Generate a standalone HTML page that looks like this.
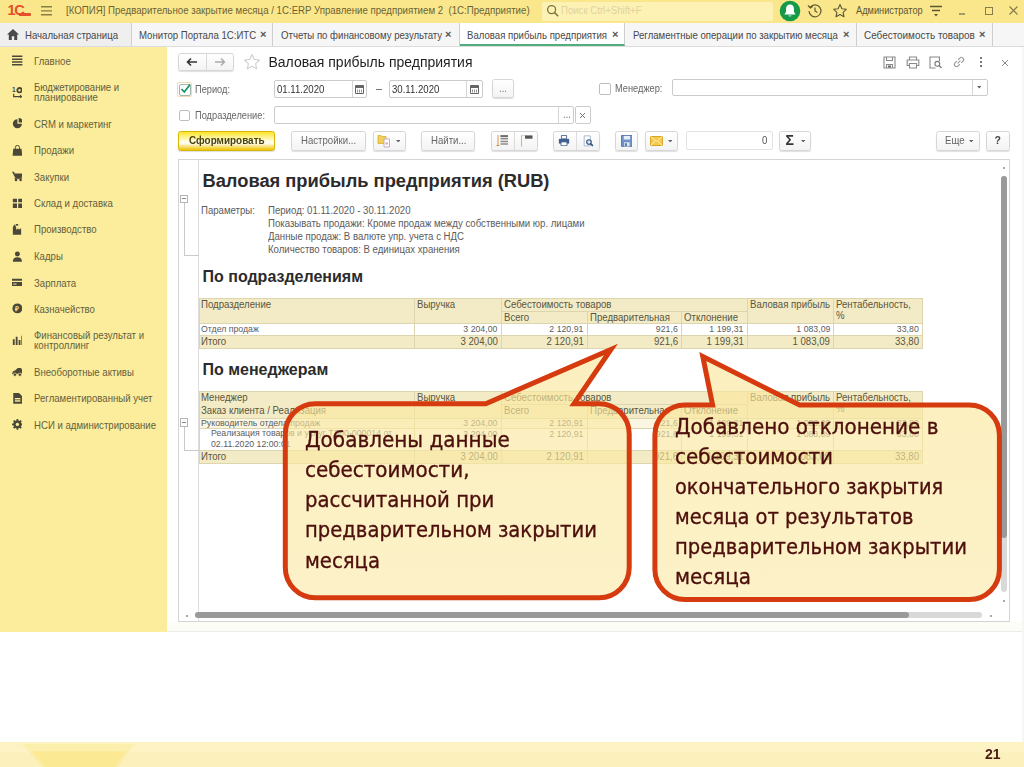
<!DOCTYPE html>
<html lang="ru"><head><meta charset="utf-8"><title>Валовая прибыль предприятия</title>
<style>
*{box-sizing:border-box;margin:0;padding:0}
html,body{width:1024px;height:767px;overflow:hidden;background:#fff}
body{position:relative;font-family:"Liberation Sans",sans-serif;font-size:10px;color:#4a4a4a}
.a{position:absolute;white-space:nowrap}
.t{position:absolute;white-space:nowrap;line-height:12px;font-size:10.4px;transform:scaleX(.925);transform-origin:0 50%}
.r{transform-origin:100% 50%;text-align:right}
/* title bar */
#tb{left:0;top:0;width:1024px;height:23px;background:#fbe78b}
#srch{left:542px;top:2px;width:231px;height:19px;background:#fdf2b3;border-radius:2px}
/* tabs */
#tabs{left:0;top:23px;width:1024px;height:24px;background:#f6f6f6;border-bottom:1px solid #dcdcdc}
.tab{position:absolute;top:0;height:23px;border-right:1px solid #cfcfcf}
.tab .t{top:6.6px;color:#484848}
.x{position:absolute;top:5px;font-size:11px;font-weight:bold;color:#555;line-height:12px}
/* sidebar */
#sb{left:0;top:47px;width:167px;height:585px;background:#fbed9c}
#sb .t{left:33.5px;color:#655f3c}
#sb svg{position:absolute;left:11.6px}
/* form */
.btn{position:absolute;height:20px;border:1px solid #d6d6d6;border-radius:2.5px;background:linear-gradient(#fff,#f3f3f3);box-shadow:0 1px 1px rgba(0,0,0,.13)}
.inp{position:absolute;height:18px;border:1px solid #cbcbcb;border-radius:2px;background:#fff}
.cb{position:absolute;width:12px;height:12px;border:1px solid #bdbdbd;border-radius:2px;background:#fff}

#rep .bg{position:absolute;background:#f3ebc6}
#rep .h{position:absolute;height:1px;background:#dcd5ae}
#rep .v{position:absolute;width:1px;background:#dcd5ae}
#rep .t{color:#5a563e;font-size:10px;transform:scaleX(.962)}
#rep .n{color:#5c5c5c;font-size:9.1px}
#rep .g{position:absolute;background:#c9c9c9}
.h1{position:absolute;white-space:nowrap;font-weight:bold;color:#2b2b2b}

.ct{position:absolute;white-space:nowrap;font-family:"DejaVu Sans","Liberation Sans",sans-serif;font-size:21.8px;color:#4d0f0c;-webkit-text-stroke:.35px #4d0f0c;}
.ct span{display:block;transform-origin:0 0}
</style></head><body>
<div class="a" id="shot" style="left:0;top:0;width:1024px;height:640px;filter:blur(.6px)">

<!-- TITLE BAR -->
<div class="a" id="tb"></div>
<div class="a" id="srch"></div>
<div class="a" style="left:7.5px;top:1.4px;font:bold 14.5px/18px 'Liberation Sans',sans-serif;color:#e2512a;letter-spacing:-1.2px">1С</div>
<div class="a" style="left:19px;top:13.4px;width:11.5px;height:2.3px;background:#e2512a;border-radius:0 1px 1px 0"></div>
<svg class="a" style="left:40px;top:5px" width="14" height="12" viewBox="0 0 14 12"><path d="M1 1.8h11M1 5.9h11M1 9.8h11" stroke="#857e45" stroke-width="1.4" fill="none"/></svg>
<div class="t" style="left:66px;top:5px;color:#6a6335;transform:scaleX(.931)">[КОПИЯ] Предварительное закрытие месяца / 1С:ERP Управление предприятием 2&nbsp; (1С:Предприятие)</div>
<svg class="a" style="left:546px;top:4px" width="14" height="14" viewBox="0 0 14 14"><circle cx="5.6" cy="5.6" r="4" stroke="#7a7444" stroke-width="1.3" fill="none"/><path d="M8.6 8.6l3.6 3.6" stroke="#7a7444" stroke-width="1.5"/></svg>
<div class="t" style="left:561px;top:5px;color:#dcd3a0">Поиск Ctrl+Shift+F</div>
<svg class="a" style="left:779px;top:0" width="22" height="22" viewBox="0 0 22 22"><circle cx="11" cy="11" r="10.3" fill="#149a49"/><path d="M11 4.6c-2.6 0-4 2-4 4.4v3l-1.6 2.4h11.2L15 12V9c0-2.4-1.4-4.4-4-4.4zM9.4 15.4a1.7 1.7 0 0 0 3.2 0z" fill="#fff"/></svg>
<svg class="a" style="left:807px;top:3px" width="16" height="16" viewBox="0 0 16 16"><path d="M3.2 4.2A6 6 0 1 1 2 8" stroke="#5d5833" stroke-width="1.2" fill="none"/><path d="M1 2.5l2.4 2.4 2.4-1.6" stroke="#5d5833" stroke-width="1.2" fill="none"/><path d="M8 4.5V8l2.4 1.6" stroke="#5d5833" stroke-width="1.2" fill="none"/></svg>
<svg class="a" style="left:832px;top:3px" width="16" height="16" viewBox="0 0 16 16"><path d="M8 1.6l1.9 4.1 4.500.5-3.3 3.100.9 4.400L8 11.5l-4 2.200.9-4.400L1.6 6.2l4.5-.5z" stroke="#5d5833" stroke-width="1.1" fill="none" stroke-linejoin="round"/></svg>
<div class="t" style="left:856px;top:5px;color:#5d5833;font-size:10px">Администратор</div>
<svg class="a" style="left:929px;top:5px" width="14" height="12" viewBox="0 0 14 12"><path d="M1 1.5h12M3 5.5h8" stroke="#5d5833" stroke-width="1.3"/><path d="M5 9h4l-2 2.5z" fill="#5d5833"/></svg>
<div class="a" style="left:959px;top:13px;width:6px;height:1.5px;background:#a39c66"></div>
<div class="a" style="left:984.5px;top:6.5px;width:8px;height:8px;border:1.3px solid #857e4c"></div>
<svg class="a" style="left:1008px;top:5px" width="11" height="11" viewBox="0 0 11 11"><path d="M1.5 1.5l8 8M9.5 1.5l-8 8" stroke="#857e4c" stroke-width="1.2"/></svg>

<!-- TABS -->
<div class="a" id="tabs">
<div class="tab" style="left:0;width:132px;background:#efefef"><svg class="a" style="left:7px;top:6px" width="12" height="11" viewBox="0 0 12 11"><path d="M6 0L0 5.500h1.800V11h3V7.200h2.400V11h3V5.500H12z" fill="#4a4a4a"/></svg><div class="t" style="left:25px">Начальная страница</div></div>
<div class="tab" style="left:132px;width:141px"><div class="t" style="left:7px">Монитор Портала 1С:ИТС</div><div class="x" style="left:128px">×</div></div>
<div class="tab" style="left:273px;width:187px"><div class="t" style="left:8px">Отчеты по финансовому результату</div><div class="x" style="left:172px">×</div></div>
<div class="tab" style="left:460px;width:165px;background:#fff;border-bottom:2px solid #4fae7d;height:23.4px"><div class="t" style="left:7px">Валовая прибыль предприятия</div><div class="x" style="left:152px">×</div></div>
<div class="tab" style="left:625px;width:232px"><div class="t" style="left:8px">Регламентные операции по закрытию месяца</div><div class="x" style="left:218px">×</div></div>
<div class="tab" style="left:857px;width:136px"><div class="t" style="left:7px;transform:scaleX(.955)">Себестоимость товаров</div><div class="x" style="left:122px">×</div></div>
</div>

<!-- SIDEBAR -->
<div class="a" id="sb">
<svg style="top:7.3px;left:11px" width="12.4" height="13.2" viewBox="0 0 13 14"><path d="M1 2.500h11M1 5.500h11M1 8.500h11M1 11.500h11" stroke="#4b4838" stroke-width="1.6"/></svg>
<div class="t" style="top:8.7px">Главное</div>
<svg style="top:39.9px" width="10.8" height="11.6" viewBox="0 0 13 14"><text x="0" y="6.5" font-family="Liberation Sans,sans-serif" font-size="8" font-weight="bold" fill="#4b4838">1</text><circle cx="9" cy="3.8" r="2.6" stroke="#4b4838" stroke-width="2.2" fill="none"/><path d="M2 8v3.6h8" stroke="#4b4838" stroke-width="1.5" fill="none"/><path d="M9.6 9.2l3.2 2.4-3.2 2.4z" fill="#4b4838"/></svg>
<div class="t" style="top:35.6px;line-height:10.6px">Бюджетирование и<br>планирование</div>
<svg style="top:71.3px" width="10.8" height="11.6" viewBox="0 0 13 14"><path d="M6.5 1.500A5.5 5.5 0 1 0 12 7H6.500z" fill="#4b4838"/><path d="M8 0v5.500h5.500A5.5 5.5 0 0 0 8 0z" fill="#4b4838"/></svg>
<div class="t" style="top:71.8px">CRM и маркетинг</div>
<svg style="top:97.8px" width="10.8" height="11.6" viewBox="0 0 13 14"><path d="M1.5 4.500h10l.8 8.500H.7z" fill="#4b4838"/><path d="M4 5.500V3a2.5 2.5 0 0 1 5 0v2.5" stroke="#4b4838" stroke-width="1.2" fill="none"/></svg>
<div class="t" style="top:98.3px">Продажи</div>
<svg style="top:124.2px" width="10.8" height="11.6" viewBox="0 0 13 14"><path d="M0 1h2.500l.6 2H13l-1.5 5.500H4z" fill="#4b4838"/><circle cx="4.8" cy="11" r="1.5" fill="#4b4838"/><circle cx="10.3" cy="11" r="1.5" fill="#4b4838"/><path d="M3 9.300h9" stroke="#4b4838" stroke-width="1.2"/></svg>
<div class="t" style="top:124.7px">Закупки</div>
<svg style="top:150.8px" width="10.8" height="11.6" viewBox="0 0 13 14"><path d="M1 1h5v4H1zM7.5 1h5v4h-5zM1 6.500h5V12H1zM7.5 6.500h5V12h-5z" fill="#4b4838"/></svg>
<div class="t" style="top:151.3px">Склад и доставка</div>
<svg style="top:176.9px" width="10.8" height="11.6" viewBox="0 0 13 14"><path d="M1 13V4l1.500-3h1L5 4v3l3-2v2l3-2v8z" fill="#4b4838"/><path d="M4.5 0h3v2h-3z" fill="#4b4838"/></svg>
<div class="t" style="top:177.4px">Производство</div>
<svg style="top:203.9px" width="10.8" height="11.6" viewBox="0 0 13 14"><circle cx="6.5" cy="3.5" r="3" fill="#4b4838"/><path d="M1 13c0-4 2-5.5 5.500-5.500S12 9 12 13z" fill="#4b4838"/></svg>
<div class="t" style="top:204.4px">Кадры</div>
<svg style="top:230.3px" width="10.8" height="11.6" viewBox="0 0 13 14"><path d="M0 2h13v2.500H0zM0 6h13v5H0z" fill="#4b4838"/><path d="M1.5 8.500h4" stroke="#fbed9c" stroke-width="1.2"/></svg>
<div class="t" style="top:230.8px">Зарплата</div>
<svg style="top:256.3px" width="10.8" height="11.6" viewBox="0 0 13 14"><circle cx="6.5" cy="6.5" r="6" fill="#4b4838"/><text x="4" y="9.5" font-family="Liberation Sans,sans-serif" font-size="8" font-weight="bold" fill="#fbed9c">₽</text></svg>
<div class="t" style="top:256.8px">Казначейство</div>
<svg style="top:288.0px" width="10.8" height="11.6" viewBox="0 0 13 14"><path d="M1 5h2.200v7H1zM4.5 2h2.200v10H4.500zM8 6h2.200v6H8zM11.3 1h1v11h-1z" fill="#4b4838"/></svg>
<div class="t" style="top:283.7px;line-height:10.6px">Финансовый результат и<br>контроллинг</div>
<svg style="top:319.3px" width="10.8" height="11.6" viewBox="0 0 13 14"><path d="M0 10l1-3.5 3-1.5 3-2.500h4l1.5 3 .5 3.500z" fill="#4b4838"/><circle cx="3.5" cy="10.5" r="2" fill="#4b4838" stroke="#fbed9c" stroke-width=".8"/><circle cx="9.5" cy="10.5" r="2" fill="#4b4838" stroke="#fbed9c" stroke-width=".8"/></svg>
<div class="t" style="top:319.8px">Внеоборотные активы</div>
<svg style="top:345.7px" width="10.8" height="11.6" viewBox="0 0 13 14"><path d="M1.5 0h7L12 3.500V13H1.500z" fill="#4b4838"/><path d="M3.5 6h6.500v4.500H3.500z" fill="#fbed9c"/><path d="M3.5 8.200h6.5" stroke="#4b4838" stroke-width="1"/></svg>
<div class="t" style="top:346.2px">Регламентированный учет</div>
<svg style="top:372.1px" width="10.8" height="11.6" viewBox="0 0 13 14"><circle cx="6.5" cy="6.5" r="3.6" stroke="#4b4838" stroke-width="2.8" fill="none"/><path d="M6.5 0v13M0 6.500h13M1.9 1.900l9.2 9.200M11.1 1.900l-9.2 9.2" stroke="#4b4838" stroke-width="2"/><circle cx="6.5" cy="6.5" r="2" fill="#fbed9c"/></svg>
<div class="t" style="top:372.6px">НСИ и администрирование</div>
</div>

<!-- FORM -->
<div class="a" id="form" style="left:0;top:0">
<!-- row 1 -->
<div class="btn" style="left:178px;top:53px;width:56px;height:18px"></div>
<div class="a" style="left:206px;top:54px;width:1px;height:16px;background:#d9d9d9"></div>
<svg class="a" style="left:186px;top:57px" width="12" height="10" viewBox="0 0 12 10"><path d="M11 5H2.5M5 1.5L1.5 5 5 8.5" stroke="#333" stroke-width="1.6" fill="none"/></svg>
<svg class="a" style="left:214px;top:57px" width="12" height="10" viewBox="0 0 12 10"><path d="M1 5h8.5M7 1.5L10.5 5 7 8.5" stroke="#a9a9a9" stroke-width="1.4" fill="none"/></svg>
<svg class="a" style="left:243px;top:53px" width="18" height="18" viewBox="0 0 18 18"><path d="M9 1.5l2.3 4.9 5.200.6-3.9 3.6 1.1 5.2L9 13.2l-4.7 2.6 1.100-5.2L1.5 7l5.200-.6z" stroke="#d0d0d0" stroke-width="1.1" fill="none" stroke-linejoin="round"/></svg>
<div class="a" style="left:268.5px;top:54px;font-size:14px;line-height:17px;color:#1f1f1f">Валовая прибыль предприятия</div>
<svg class="a" style="left:883px;top:56px" width="13" height="13" viewBox="0 0 13 13"><path d="M1 1h11v11H1z" stroke="#8a8a8a" stroke-width="1.1" fill="none"/><path d="M3.5 1v3.5h6V1M3.5 12V8.5h6V12" stroke="#8a8a8a" stroke-width="1.1" fill="none"/><path d="M5 9.5h3v2H5z" fill="#666"/></svg>
<svg class="a" style="left:906px;top:56px" width="14" height="13" viewBox="0 0 14 13"><path d="M3.5 4V1h7v3M3.5 9.5H1.2V4h11.6v5.5h-2.3" stroke="#8a8a8a" stroke-width="1.1" fill="none"/><path d="M3.5 7.5h7V12h-7z" stroke="#8a8a8a" stroke-width="1.1" fill="none"/></svg>
<svg class="a" style="left:929px;top:56px" width="14" height="13" viewBox="0 0 14 13"><path d="M10.5 5V1H1v11h5.5" stroke="#8a8a8a" stroke-width="1.1" fill="none"/><circle cx="8.3" cy="7.8" r="2.4" stroke="#777" stroke-width="1.1" fill="none"/><path d="M10 9.5l2.5 2.5" stroke="#777" stroke-width="1.3"/></svg>
<svg class="a" style="left:952px;top:55px" width="14" height="14" viewBox="0 0 14 14"><g transform="rotate(-45 7 7)" stroke="#9a9a9a" stroke-width="1.1" fill="none"><path d="M6 4.8H3.6a2.2 2.2 0 0 0 0 4.4H6"/><path d="M8 4.8h2.4a2.2 2.2 0 0 1 0 4.4H8"/><path d="M5 7h4"/></g></svg>
<div class="a" style="left:980px;top:57px;width:2px;height:2px;background:#777;box-shadow:0 4px 0 #777,0 8px 0 #777"></div>
<svg class="a" style="left:1001px;top:59px" width="8" height="8" viewBox="0 0 8 8"><path d="M1 1l6 6M7 1L1 7" stroke="#8a8a8a" stroke-width="1"/></svg>
<!-- row 2 -->
<div class="a" style="left:177px;top:82px;width:15px;height:15px;border:1px solid #f3d9b8;border-radius:2px"></div>
<div class="cb" style="left:178.5px;top:83.5px;border-color:#9fb5a8"></div>
<svg class="a" style="left:179px;top:82px" width="13" height="13" viewBox="0 0 13 13"><path d="M2.5 7l2.8 3L11 2.5" stroke="#14936a" stroke-width="1.7" fill="none"/></svg>
<div class="t" style="left:194.5px;top:83.5px;color:#666;transform:scaleX(.89)">Период:</div>
<div class="inp" style="left:274px;top:80px;width:93px"></div>
<div class="a" style="left:351.5px;top:81px;width:1px;height:16px;background:#d5d5d5"></div>
<div class="t" style="left:277px;top:83.5px;color:#333">01.11.2020</div>
<svg class="a cal" style="left:355px;top:84px" width="9" height="10" viewBox="0 0 9 10"><path d="M.5 1.5h8v8h-8z" fill="#fff" stroke="#666" stroke-width="1"/><path d="M.5 1.5h8v2.5h-8z" fill="#666"/><path d="M2.5 5.5v3M4.5 5.5v3M6.5 5.5v3" stroke="#888" stroke-width=".9"/></svg>
<div class="a" style="left:376px;top:88.5px;width:6px;height:1px;background:#777"></div>
<div class="inp" style="left:388.5px;top:80px;width:94.5px"></div>
<div class="a" style="left:466px;top:81px;width:1px;height:16px;background:#d5d5d5"></div>
<div class="t" style="left:392px;top:83.5px;color:#333">30.11.2020</div>
<svg class="a cal" style="left:470px;top:84px" width="9" height="10" viewBox="0 0 9 10"><path d="M.5 1.5h8v8h-8z" fill="#fff" stroke="#666" stroke-width="1"/><path d="M.5 1.5h8v2.5h-8z" fill="#666"/><path d="M2.5 5.5v3M4.5 5.5v3M6.5 5.5v3" stroke="#888" stroke-width=".9"/></svg>
<div class="btn" style="left:491.5px;top:79px;width:22.5px;height:19px"></div>
<div class="t" style="left:499px;top:83px;color:#777">...</div>
<div class="cb" style="left:599px;top:82.5px"></div>
<div class="t" style="left:615px;top:83px;color:#666;transform:scaleX(.89)">Менеджер:</div>
<div class="inp" style="left:671.5px;top:78.5px;width:316px;height:17.5px"></div>
<div class="a" style="left:971.5px;top:79.5px;width:1px;height:15.5px;background:#d5d5d5"></div>
<svg class="a" style="left:977px;top:86px" width="4.4" height="2.6" viewBox="0 0 5 3"><path d="M0 0h5L2.5 3z" fill="#666"/></svg>
<!-- row 3 -->
<div class="cb" style="left:178.5px;top:109.5px;width:11.5px;height:11.5px"></div>
<div class="t" style="left:194.5px;top:109.5px;color:#666;transform:scaleX(.89)">Подразделение:</div>
<div class="inp" style="left:274px;top:106px;width:300px;height:17.5px"></div>
<div class="a" style="left:558px;top:107px;width:1px;height:15.5px;background:#d5d5d5"></div>
<div class="t" style="left:562.5px;top:109px;color:#777">...</div>
<div class="inp" style="left:574.5px;top:106px;width:16px;height:17.5px"></div>
<svg class="a" style="left:579px;top:111.5px" width="7" height="7" viewBox="0 0 7 7"><path d="M1 1l5 5M6 1L1 6" stroke="#777" stroke-width="1"/></svg>
<!-- row 4 -->
<div class="btn" style="left:178px;top:130.5px;width:96.5px;border-color:#d9b400;background:linear-gradient(#ffe629,#f7d0 60%,#efc400)"></div>
<div class="t" style="left:188.5px;top:134.5px;font-weight:bold;color:#4a4208;transform:scaleX(.955)">Сформировать</div>
<div class="btn" style="left:290.5px;top:130.5px;width:75px"></div>
<div class="t" style="left:300.5px;top:134.5px;color:#666">Настройки...</div>
<div class="btn" style="left:372.5px;top:130.5px;width:33px"></div>
<div class="btn" style="left:421px;top:130.5px;width:53.5px"></div>
<div class="t" style="left:431px;top:134.5px;color:#666">Найти...</div>
<div class="btn" style="left:490.5px;top:130.5px;width:47px"></div>
<div class="a" style="left:514px;top:131.5px;width:1px;height:18px;background:#dcdcdc"></div>
<div class="btn" style="left:552.5px;top:130.5px;width:47px"></div>
<div class="a" style="left:576px;top:131.5px;width:1px;height:18px;background:#dcdcdc"></div>
<div class="btn" style="left:615px;top:130.5px;width:23px"></div>
<div class="btn" style="left:644.5px;top:130.5px;width:33px"></div>
<div class="inp" style="left:685.5px;top:131px;width:87px;height:19px;border-color:#e3e3e3"></div>
<div class="t" style="left:761.5px;top:134.5px;color:#555">0</div>
<div class="btn" style="left:779px;top:130.5px;width:32px"></div>
<div class="a" style="left:785.5px;top:131px;font-size:14px;line-height:18px;font-weight:bold;color:#333">Σ</div>
<div class="btn" style="left:936px;top:130.5px;width:44px"></div>
<div class="t" style="left:945px;top:134.5px;color:#666">Еще</div>
<div class="btn" style="left:986px;top:130.5px;width:23.5px"></div>
<div class="a" style="left:994.5px;top:134px;font-size:10.5px;line-height:12px;font-weight:bold;color:#444">?</div>
<!-- toolbar icons -->
<svg class="a" style="left:377px;top:133px" width="15" height="15" viewBox="0 0 15 15"><path d="M1 2.5h3l1 1h4v7H1z" fill="#f2cf5a" stroke="#d9ae2c" stroke-width=".8"/><path d="M7 6h5.5v8H7z" fill="#fff" stroke="#b9a6c8" stroke-width=".9"/><path d="M8.5 9.5h2.5v2h-2.5z" fill="#e8a0a0"/></svg>
<svg class="a" style="left:396px;top:139.5px" width="4.4" height="2.6" viewBox="0 0 5 3"><path d="M0 0h5L2.5 3z" fill="#666"/></svg>
<svg class="a" style="left:496px;top:134px" width="13" height="13" viewBox="0 0 13 13"><path d="M2 1v11" stroke="#e0a060" stroke-width="1.1"/><path d="M.5 11.5h3" stroke="#c98d50" stroke-width="1"/><path d="M4.5 2h7.5M4.5 4.7h7.5M4.5 7.4h7.5M4.5 10h7.5" stroke="#8c8c8c" stroke-width="1.5"/><path d="M4.5 1.2h7.5v2H4.5z" fill="#6f6f6f"/></svg>
<svg class="a" style="left:520px;top:134px" width="13" height="13" viewBox="0 0 13 13"><path d="M1.5 1v11.5" stroke="#e6b27c" stroke-width="1.1"/><path d="M1.5 1.5H12" stroke="#d8d8d8" stroke-width="1"/><path d="M5 1.5h7.5v3.2H5z" fill="#555"/></svg>
<svg class="a" style="left:558px;top:135px" width="12" height="11.2" viewBox="0 0 14 13"><path d="M4 .5h6v4H4z" fill="#fff" stroke="#3c5a84" stroke-width="1"/><path d="M1 4.5h12v5.5H1z" fill="#3f5f8e"/><path d="M3.5 8h7v4.5h-7z" fill="#fff" stroke="#3c5a84" stroke-width="1"/></svg>
<svg class="a" style="left:582px;top:134.5px" width="12.2" height="12.2" viewBox="0 0 14 14"><path d="M2.5 1h7v11.5h-7z" fill="#fff" stroke="#9db0c8" stroke-width="1"/><circle cx="8" cy="8" r="2.6" fill="#dfeaf5" stroke="#2f4f7c" stroke-width="1.3"/><path d="M10 10l2.5 2.5" stroke="#2f4f7c" stroke-width="1.8"/></svg>
<svg class="a" style="left:620.5px;top:134.8px" width="11.8" height="11.8" viewBox="0 0 13 13"><path d="M.5.5h12v12H.5z" fill="#6f93c4" stroke="#4c72a8" stroke-width="1"/><path d="M3 1h7v4H3z" fill="#e8eef7"/><path d="M3.5 8h6v4.5h-6z" fill="#dfe6f0"/><path d="M4.5 9h2v3h-2z" fill="#4c72a8"/></svg>
<svg class="a" style="left:650px;top:136px" width="13" height="10" viewBox="0 0 13 10"><path d="M.5.5h12v9H.5z" fill="#f6c84c" stroke="#d9a526" stroke-width="1"/><path d="M.5.5l6 5 6-5M.5 9.5l4.5-4M12.5 9.5l-4.5-4" stroke="#fff0c0" stroke-width="1" fill="none"/></svg>
<svg class="a" style="left:668px;top:139.5px" width="4.4" height="2.6" viewBox="0 0 5 3"><path d="M0 0h5L2.5 3z" fill="#666"/></svg>
<svg class="a" style="left:801px;top:139.5px" width="4.4" height="2.6" viewBox="0 0 5 3"><path d="M0 0h5L2.5 3z" fill="#666"/></svg>
<svg class="a" style="left:969px;top:139.5px" width="4.4" height="2.6" viewBox="0 0 5 3"><path d="M0 0h5L2.5 3z" fill="#666"/></svg>
</div>

<!-- REPORT -->
<div class="a" id="rep" style="left:0;top:0;width:1024px;height:767px">
<div class="a" style="left:178px;top:159px;width:832px;height:463px;border:1px solid #d4d4d4;background:#fff"></div>
<div class="a" style="left:198px;top:160px;width:1px;height:461px;background:#dedede"></div>
<div class="g" style="left:183.6px;top:202.5px;width:1px;height:52.5px"></div>
<div class="g" style="left:183.6px;top:255.0px;width:15px;height:1px"></div>
<div class="a" style="left:180px;top:194.5px;width:8.4px;height:8.4px;border:1px solid #b5b5b5;background:#fff"></div>
<div class="a" style="left:182.2px;top:198.2px;width:4px;height:1px;background:#888"></div>
<div class="g" style="left:183.6px;top:426.3px;width:1px;height:23.3px"></div>
<div class="g" style="left:183.6px;top:449.6px;width:15px;height:1px"></div>
<div class="a" style="left:180px;top:418.3px;width:8.4px;height:8.4px;border:1px solid #b5b5b5;background:#fff"></div>
<div class="a" style="left:182.2px;top:422.0px;width:4px;height:1px;background:#888"></div>
<div class="h1" style="left:202.5px;top:170px;font-size:18.3px;line-height:22px">Валовая прибыль предприятия (RUB)</div>
<div class="h1" style="left:202.5px;top:266.8px;font-size:16px;line-height:19px">По подразделениям</div>
<div class="h1" style="left:202.5px;top:360.3px;font-size:16px;line-height:19px">По менеджерам</div>
<div class="t" style="left:200.5px;top:204.5px;color:#5c5c5c">Параметры:</div>
<div class="t" style="left:268px;top:204.5px;color:#5c5c5c">Период: 01.11.2020 - 30.11.2020</div>
<div class="t" style="left:268px;top:217.6px;color:#5c5c5c">Показывать продажи: Кроме продаж между собственными юр. лицами</div>
<div class="t" style="left:268px;top:230.6px;color:#5c5c5c">Данные продаж: В валюте упр. учета с НДС</div>
<div class="t" style="left:268px;top:243.7px;color:#5c5c5c">Количество товаров: В единицах хранения</div>
<div class="bg" style="left:198.5px;top:297.5px;width:723.5px;height:25.8px"></div>
<div class="bg" style="left:198.5px;top:335.0px;width:723.5px;height:13.3px"></div>
<div class="h" style="left:198.5px;top:297.5px;width:723.5px"></div>
<div class="h" style="left:500.8px;top:310.8px;width:246.0px"></div>
<div class="h" style="left:198.5px;top:323.3px;width:723.5px"></div>
<div class="h" style="left:198.5px;top:335.0px;width:723.5px"></div>
<div class="h" style="left:198.5px;top:348.3px;width:723.5px"></div>
<div class="v" style="left:198.5px;top:297.5px;height:51.8px"></div>
<div class="v" style="left:413.5px;top:297.5px;height:51.8px"></div>
<div class="v" style="left:500.8px;top:297.5px;height:51.8px"></div>
<div class="v" style="left:586.5px;top:310.8px;height:38.5px"></div>
<div class="v" style="left:680.9px;top:310.8px;height:38.5px"></div>
<div class="v" style="left:746.8px;top:297.5px;height:51.8px"></div>
<div class="v" style="left:833.2px;top:297.5px;height:51.8px"></div>
<div class="v" style="left:922.0px;top:297.5px;height:51.8px"></div>
<div class="t" style="left:201.0px;top:298.5px">Подразделение</div>
<div class="t" style="left:416.5px;top:298.5px">Выручка</div>
<div class="t" style="left:503.8px;top:298.5px">Себестоимость товаров</div>
<div class="t" style="left:503.8px;top:311.5px">Всего</div>
<div class="t" style="left:589.5px;top:311.5px">Предварительная</div>
<div class="t" style="left:683.9px;top:311.5px">Отклонение</div>
<div class="t" style="left:749.8px;top:298.5px">Валовая прибыль</div>
<div class="t" style="left:836.2px;top:298.5px;line-height:11.5px">Рентабельность,<br>%</div>
<div class="t n" style="left:201.0px;top:323.3px">Отдел продаж</div>
<div class="t n r" style="right:526.2px;top:323.3px">3 204,00</div>
<div class="t n r" style="right:440.5px;top:323.3px">2 120,91</div>
<div class="t n r" style="right:346.1px;top:323.3px">921,6</div>
<div class="t n r" style="right:280.2px;top:323.3px">1 199,31</div>
<div class="t n r" style="right:193.8px;top:323.3px">1 083,09</div>
<div class="t n r" style="right:105.0px;top:323.3px">33,80</div>
<div class="t" style="left:201.0px;top:336.0px">Итого</div>
<div class="t r" style="right:526.2px;top:336.0px">3 204,00</div>
<div class="t r" style="right:440.5px;top:336.0px">2 120,91</div>
<div class="t r" style="right:346.1px;top:336.0px">921,6</div>
<div class="t r" style="right:280.2px;top:336.0px">1 199,31</div>
<div class="t r" style="right:193.8px;top:336.0px">1 083,09</div>
<div class="t r" style="right:105.0px;top:336.0px">33,80</div>
<div class="bg" style="left:198.5px;top:390.8px;width:723.5px;height:26.8px"></div>
<div class="bg" style="left:198.5px;top:417.6px;width:723.5px;height:10.8px;background:#faf6e2"></div>
<div class="bg" style="left:198.5px;top:450.0px;width:723.5px;height:12.6px"></div>
<div class="h" style="left:198.5px;top:390.8px;width:723.5px"></div>
<div class="h" style="left:500.8px;top:404.2px;width:246.0px"></div>
<div class="h" style="left:198.5px;top:417.6px;width:723.5px"></div>
<div class="h" style="left:198.5px;top:428.4px;width:723.5px"></div>
<div class="h" style="left:198.5px;top:450.0px;width:723.5px"></div>
<div class="h" style="left:198.5px;top:462.6px;width:723.5px"></div>
<div class="v" style="left:198.5px;top:390.8px;height:72.8px"></div>
<div class="v" style="left:413.5px;top:390.8px;height:72.8px"></div>
<div class="v" style="left:500.8px;top:390.8px;height:72.8px"></div>
<div class="v" style="left:586.5px;top:404.2px;height:59.4px"></div>
<div class="v" style="left:680.9px;top:404.2px;height:59.4px"></div>
<div class="v" style="left:746.8px;top:390.8px;height:72.8px"></div>
<div class="v" style="left:833.2px;top:390.8px;height:72.8px"></div>
<div class="v" style="left:922.0px;top:390.8px;height:72.8px"></div>
<div class="t" style="left:201.0px;top:391.6px">Менеджер</div>
<div class="t" style="left:201.0px;top:405.0px">Заказ клиента / Реализация</div>
<div class="t" style="left:416.5px;top:391.6px">Выручка</div>
<div class="t" style="left:503.8px;top:391.6px">Себестоимость товаров</div>
<div class="t" style="left:503.8px;top:405.0px">Всего</div>
<div class="t" style="left:589.5px;top:405.0px">Предварительная</div>
<div class="t" style="left:683.9px;top:405.0px">Отклонение</div>
<div class="t" style="left:749.8px;top:391.6px">Валовая прибыль</div>
<div class="t" style="left:836.2px;top:391.6px;line-height:11.5px">Рентабельность,<br>%</div>
<div class="t n" style="left:201.0px;top:417.1px">Руководитель отдела продаж</div>
<div class="t n r" style="right:526.2px;top:417.1px">3 204,00</div>
<div class="t n r" style="right:440.5px;top:417.1px">2 120,91</div>
<div class="t n r" style="right:346.1px;top:417.1px">921,6</div>
<div class="t n r" style="right:280.2px;top:417.1px">1 199,31</div>
<div class="t n r" style="right:193.8px;top:417.1px">1 083,09</div>
<div class="t n r" style="right:105.0px;top:417.1px">33,80</div>
<div class="t n" style="left:211.0px;top:428.3px;line-height:10.2px">Реализация товаров и услуг ТД00-000014 от<br>02.11.2020 12:00:01</div>
<div class="t n r" style="right:526.2px;top:428.3px">3 204,00</div>
<div class="t n r" style="right:440.5px;top:428.3px">2 120,91</div>
<div class="t n r" style="right:346.1px;top:428.3px">921,6</div>
<div class="t n r" style="right:280.2px;top:428.3px">1 199,31</div>
<div class="t n r" style="right:193.8px;top:428.3px">1 083,09</div>
<div class="t n r" style="right:105.0px;top:428.3px">33,80</div>
<div class="t" style="left:201.0px;top:450.6px">Итого</div>
<div class="t r" style="right:526.2px;top:450.6px">3 204,00</div>
<div class="t r" style="right:440.5px;top:450.6px">2 120,91</div>
<div class="t r" style="right:346.1px;top:450.6px">921,6</div>
<div class="t r" style="right:280.2px;top:450.6px">1 199,31</div>
<div class="t r" style="right:193.8px;top:450.6px">1 083,09</div>
<div class="t r" style="right:105.0px;top:450.6px">33,80</div>
<div class="a" style="left:1000.5px;top:176px;width:6.5px;height:416px;border-radius:3px;background:#d9d9d9"></div>
<div class="a" style="left:1000.5px;top:176px;width:6.5px;height:362px;border-radius:3px;background:#9a9a9a"></div>
<div class="a" style="left:195px;top:612px;width:787px;height:6px;border-radius:3px;background:#d9d9d9"></div>
<div class="a" style="left:195px;top:612px;width:714px;height:6px;border-radius:3px;background:#9a9a9a"></div>
<div class="a" style="left:1003px;top:167px;width:2px;height:2px;background:#aaa"></div>
<div class="a" style="left:1003px;top:600px;width:2px;height:2px;background:#aaa"></div>
<div class="a" style="left:186px;top:615px;width:2px;height:2px;background:#aaa"></div>
<div class="a" style="left:990px;top:615px;width:2px;height:2px;background:#aaa"></div>
</div>

<div class="a" style="left:167px;top:622px;width:857px;height:9px;background:#fdfdf7"></div><div class="a" style="left:167px;top:631px;width:857px;height:1px;background:#ececec"></div>
</div>
<!-- CALLOUTS -->
<svg class="a" style="left:0;top:0" width="1024" height="767" viewBox="0 0 1024 767">
<defs><linearGradient id="cg" x1="0" y1="0" x2="0" y2="1"><stop offset="0" stop-color="#fae69a" stop-opacity=".64"/><stop offset=".4" stop-color="#fae8a0" stop-opacity=".64"/><stop offset="1" stop-color="#fbeaa8" stop-opacity=".64"/></linearGradient></defs>
<path d="M315.3 403.7H485.7L611.0 349.4L574.0 403.7H599.2A30 30 0 0 1 629.2 433.7V567.8A30 30 0 0 1 599.2 597.8H315.3A30 30 0 0 1 285.3 567.8V433.7A30 30 0 0 1 315.3 403.7Z" fill="url(#cg)" stroke="#d63a0f" stroke-width="5" stroke-linejoin="miter" stroke-miterlimit="12"/>
<path d="M684.9 405.0H712.6L702.8 356.6L799.6 405.0H969.4A30 30 0 0 1 999.4 435.0V569.5A30 30 0 0 1 969.4 599.5H684.9A30 30 0 0 1 654.9 569.5V435.0A30 30 0 0 1 684.9 405.0Z" fill="url(#cg)" stroke="#d63a0f" stroke-width="5" stroke-linejoin="miter" stroke-miterlimit="12"/>
</svg>
<div class="ct" style="left:305.4px;top:424.6px;line-height:30.25px"><span style="transform:scaleX(0.917)">Добавлены данные</span><span style="transform:scaleX(0.914)">себестоимости,</span><span style="transform:scaleX(0.904)">рассчитанной при</span><span style="transform:scaleX(0.899)">предварительном закрытии</span><span style="transform:scaleX(0.903)">месяца</span></div>
<div class="ct" style="left:674.6px;top:411.7px;line-height:30.05px"><span style="transform:scaleX(0.916)">Добавлено отклонение в</span><span style="transform:scaleX(0.913)">себестоимости</span><span style="transform:scaleX(0.889)">окончательного закрытия</span><span style="transform:scaleX(0.895)">месяца от результатов</span><span style="transform:scaleX(0.899)">предварительном закрытии</span><span style="transform:scaleX(0.915)">месяца</span></div>

<div class="a" style="left:1022px;top:47px;width:2px;height:695px;background:#f6f6f6"></div>
<!-- FOOTER -->
<div class="a" id="ft" style="left:0;top:741.5px;width:1024px;height:26px;background:linear-gradient(#fdf2c0,#fdf3c6 35%,#fcf0bc 45%,#fcf0bc)"></div>
<svg class="a" style="left:0;top:741px" width="200" height="26" viewBox="0 0 200 26"><path d="M22 3h112l-16 23H42z" fill="#fbe88a" opacity=".4"/><path d="M32 10h94l-11 16H45z" fill="#fbe47c" opacity=".45"/></svg>
<div class="a" style="left:985px;top:746px;font-size:14px;line-height:16px;font-weight:bold;color:#4a1e16">21</div>

</body></html>
